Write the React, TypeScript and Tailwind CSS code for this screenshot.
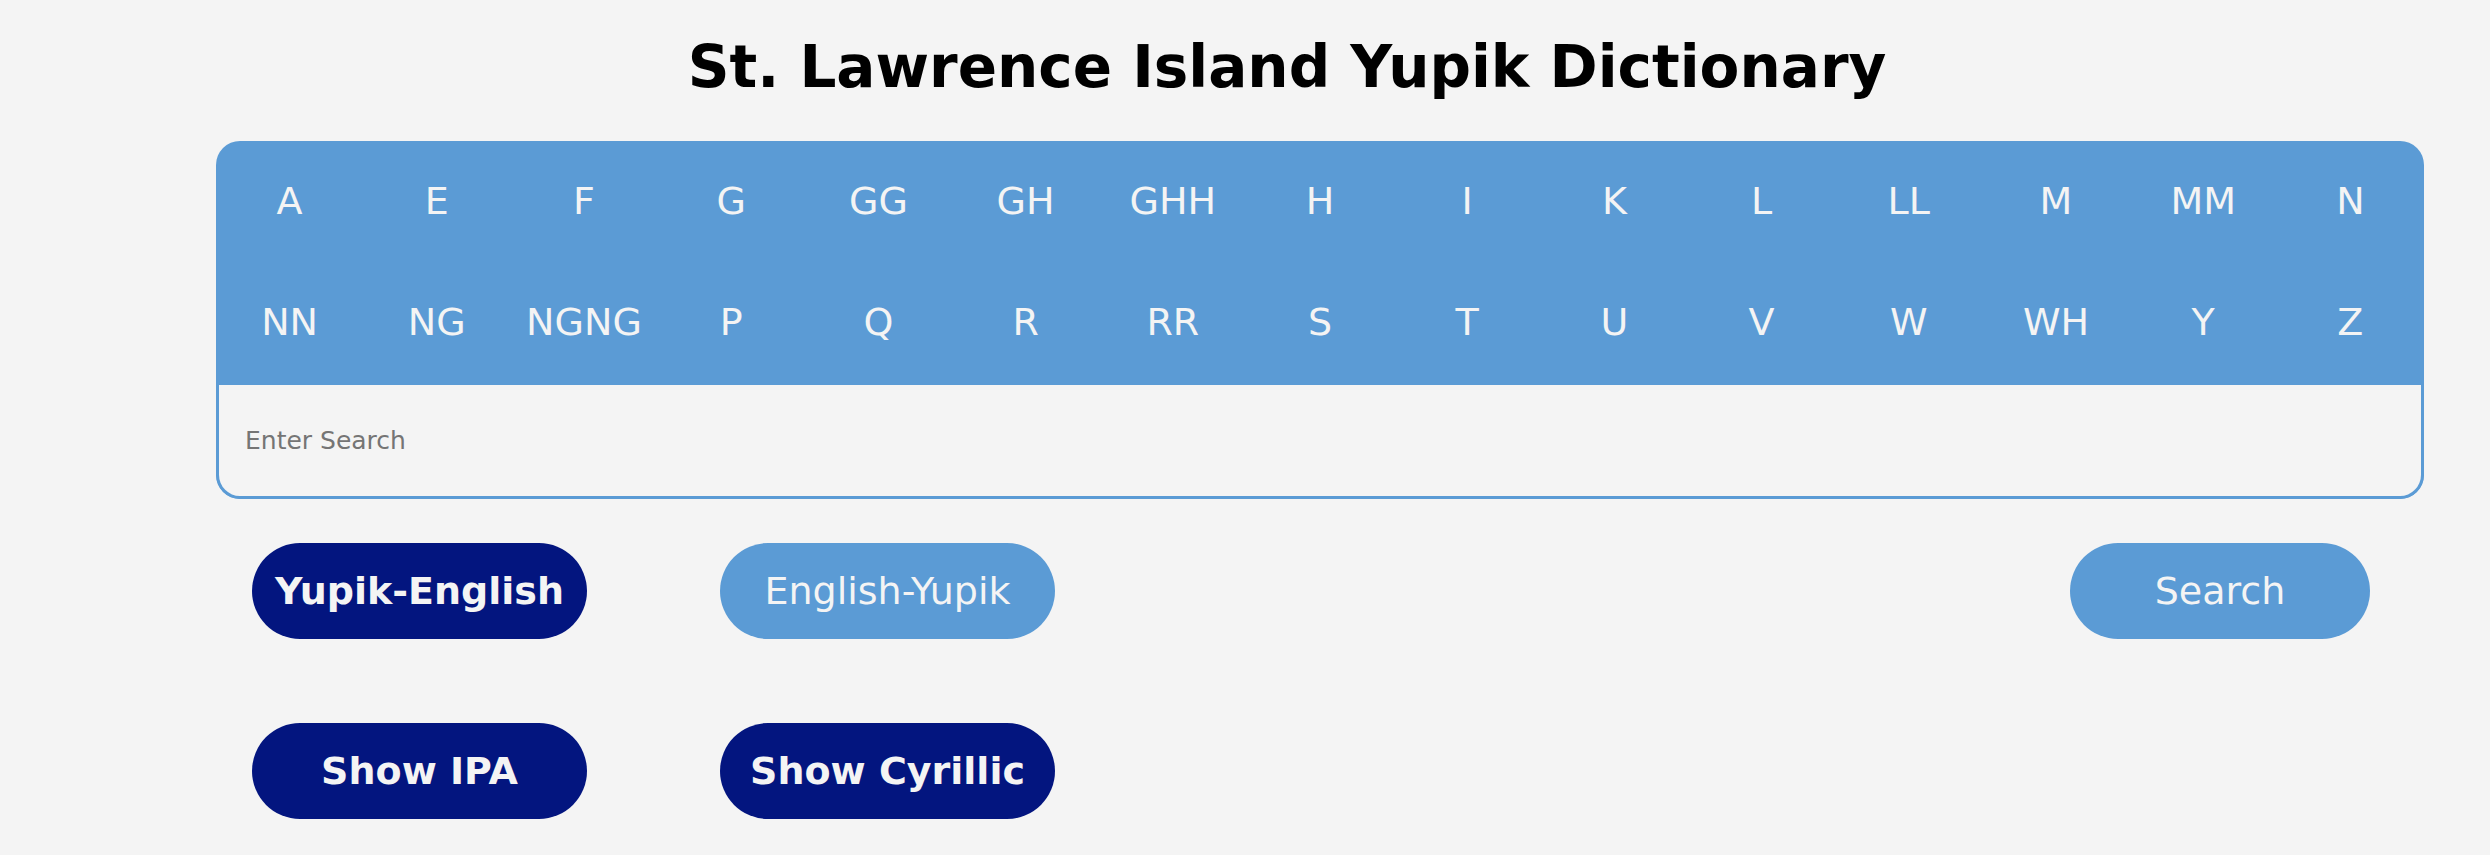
const rowOne = ["A", "E", "F", "G", "GG", "GH", "GHH", "H", "I", "K", "L", "LL", "M", "MM", "N"];
const rowTwo = ["NN", "NG", "NGNG", "P", "Q", "R", "RR", "S", "T", "U", "V", "W", "WH", "Y", "Z"];

const LetterRow = ({ letters }: { letters: string[] }) => (
  <div className="grid h-[121px] grid-cols-15 items-center">
    {letters.map((l) => (
      <button key={l} className="text-center text-[38px] text-[#f4f4f4]">
        {l}
      </button>
    ))}
  </div>
);

const App = () => {
  return (
    <div className="min-h-screen bg-[#f4f4f4] font-['DejaVu_Sans',sans-serif]">
      <h1 className="pt-[38px] pl-[84px] text-center text-[58px] leading-none font-bold text-black">
        St. Lawrence Island Yupik Dictionary
      </h1>

      <div className="mt-[45px] mr-[66px] ml-[216px] overflow-hidden rounded-[24px] bg-[#5b9bd5]">
        <LetterRow letters={rowOne} />
        <LetterRow letters={rowTwo} />
        <div className="mt-[2px] h-[114px] rounded-b-[24px] border-[3px] border-t-0 border-[#5b9bd5] bg-[#f4f4f4]">
          <input
            type="text"
            placeholder="Enter Search"
            className="h-full w-full bg-transparent pl-[26px] text-[25px] text-black outline-none placeholder:text-[#757575]"
          />
        </div>
      </div>

      <div className="mt-[44px] mr-[120px] ml-[252px] flex items-center gap-[133px]">
        <button className="h-[96px] w-[335px] rounded-full bg-[#03157f] text-[38px] font-bold text-[#f4f4f4]">
          Yupik-English
        </button>
        <button className="h-[96px] w-[335px] rounded-full bg-[#5b9bd5] text-[38px] text-[#f4f4f4]">
          English-Yupik
        </button>
        <button className="ml-auto h-[96px] w-[300px] rounded-full bg-[#5b9bd5] text-[38px] text-[#f4f4f4]">
          Search
        </button>
      </div>

      <div className="mt-[84px] ml-[252px] flex items-center gap-[133px]">
        <button className="h-[96px] w-[335px] rounded-full bg-[#03157f] text-[38px] font-bold text-[#f4f4f4]">
          Show IPA
        </button>
        <button className="h-[96px] w-[335px] rounded-full bg-[#03157f] text-[38px] font-bold text-[#f4f4f4]">
          Show Cyrillic
        </button>
      </div>
    </div>
  );
};

export default App;
